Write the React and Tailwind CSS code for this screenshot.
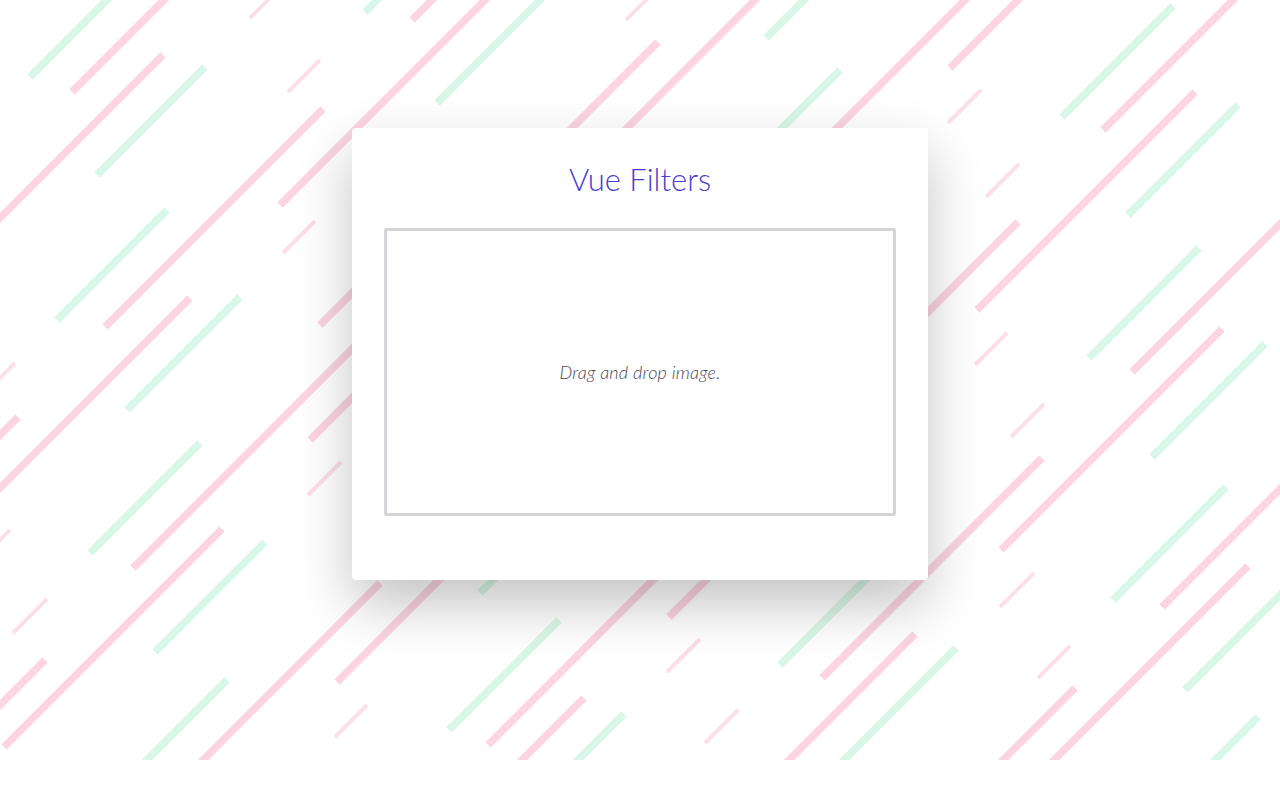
import React from 'react';

// background stripes, all at 45deg: [kind, x, y, len] -> (x,y) to (x+len, y-len)
// p = thick pink, g = thick green, t = thin pink
const stripes = [
    ['g', 30, 77, 90], ['p', 72, 92, 96], ['p', -5, 223, 168], ['g', 97, 175, 108],
    ['t', 250, 18, 24], ['t', 288, 92, 32], ['p', 280, 205, 212], ['g', 365, 12, 16],
    ['p', 412, 20, 24], ['g', 437, 103, 110], ['p', 105, 327, 218], ['g', 57, 320, 110],
    ['t', 283, 253, 32], ['p', -5, 493, 195], ['g', 127, 410, 113], ['t', -5, 383, 20],
    ['p', -10, 445, 28], ['p', 310, 440, 50], ['p', 320, 325, 40], ['t', 308, 495, 33],
    ['g', 90, 553, 110], ['p', 133, 568, 227], ['t', -5, 545, 15], ['g', 155, 652, 110],
    ['p', 4, 747, 218], ['t', 13, 633, 34], ['p', -5, 710, 50], ['g', 140, 767, 87],
    ['p', 196, 767, 184], ['p', 337, 682, 105], ['t', 335, 737, 32],
    ['p', 560, 140, 98], ['p', 620, 135, 140], ['g', 766, 38, 46], ['g', 775, 135, 65],
    ['p', 830, 135, 145], ['p', 950, 68, 75], ['t', 948, 123, 33], ['g', 1062, 117, 111],
    ['p', 1103, 130, 142], ['p', 977, 310, 218], ['g', 1128, 215, 110], ['t', 986, 197, 33],
    ['p', 920, 320, 98], ['g', 1089, 358, 110], ['p', 1132, 372, 158], ['t', 975, 365, 32],
    ['p', 1001, 550, 221], ['g', 1152, 457, 113], ['t', 626, 20, 24], ['p', 822, 678, 220],
    ['t', 1011, 437, 33], ['g', 1113, 600, 113], ['p', 1162, 607, 130], ['t', 1000, 607, 34],
    ['g', 780, 665, 95], ['p', 669, 617, 45], ['p', 488, 745, 170], ['t', 667, 672, 33],
    ['t', 705, 743, 33], ['p', 782, 767, 133], ['g', 837, 767, 119], ['p', 996, 767, 79],
    ['p', 1047, 767, 201], ['t', 1038, 678, 32], ['g', 1185, 690, 100], ['g', 1208, 767, 50],
    ['g', 449, 730, 110], ['p', 515, 767, 69], ['g', 571, 767, 53], ['g', 480, 593, 20],
];

const strokeFor = {
    p: { color: '#fcd4e2', width: 7.5 },
    g: { color: '#d9f7e8', width: 7.5 },
    t: { color: '#fddfe7', width: 4 },
};

const Stripes = () => (
    <svg className="absolute left-0 top-0" width="1280" height="760" viewBox="0 0 1280 760">
        {stripes.map(([kind, x, y, len], i) => (
            <line
                key={i}
                x1={x}
                y1={y}
                x2={x + len}
                y2={y - len}
                stroke={strokeFor[kind].color}
                strokeWidth={strokeFor[kind].width}
                strokeLinecap="butt"
            />
        ))}
    </svg>
);

const DropZone = () => (
    <div className="h-[288px] rounded-[3px] border-[3px] border-[#d4d5dc] flex items-center justify-center">
        <p className="mt-[1px] font-['Lato',sans-serif] font-light italic text-[18px] text-[#3f4556] tracking-[0.2px]">
            Drag and drop image.
        </p>
    </div>
);

export default function App() {
    return (
        <div className="relative w-full h-[800px] bg-white overflow-hidden">
            <Stripes />

            <div className="relative flex justify-center pt-[128px]">
                <div className="w-[576px] h-[452px] bg-white rounded-[4px] shadow-[0_24px_55px_rgba(0,0,0,0.24)] px-8 pt-8">
                    <h1 className="h-[36px] mt-[1px] mb-[31px] text-center font-['Lato',sans-serif] font-light text-[31px] leading-[36px] text-[#4a3ecf]">
                        Vue Filters
                    </h1>
                    <DropZone />
                </div>
            </div>
        </div>
    );
}
